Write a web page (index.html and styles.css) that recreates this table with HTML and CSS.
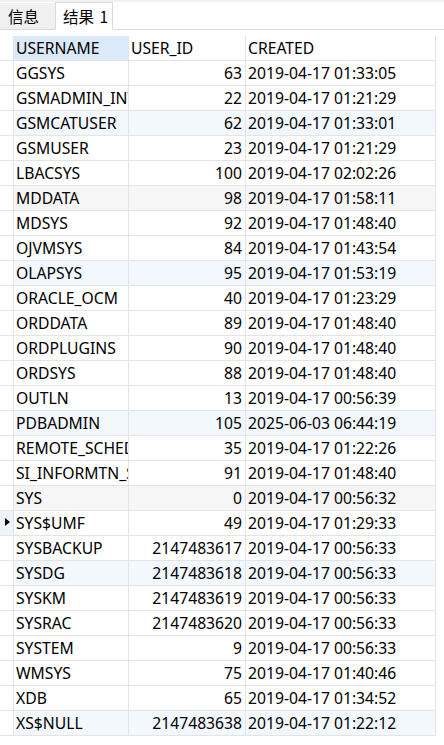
FILE: index.html
```html
<!DOCTYPE html>
<html>
<head>
<meta charset="utf-8">
<link rel="stylesheet" href="styles.css">
</head>
<body>
<div class="tabbar">
  <div class="tab">信息</div>
  <div class="tab active">结果 1</div>
</div>
<div class="grid">
  <div class="row head">
    <div class="c g"></div><div class="c u sel">USERNAME</div><div class="c i">USER_ID</div><div class="c d">CREATED</div>
  </div>
  <div class="row"><div class="c g"></div><div class="c u">GGSYS</div><div class="c i num">63</div><div class="c d">2019-04-17 01:33:05</div></div>
  <div class="row"><div class="c g"></div><div class="c u">GSMADMIN_INTERNAL</div><div class="c i num">22</div><div class="c d">2019-04-17 01:21:29</div></div>
  <div class="row blue"><div class="c g"></div><div class="c u">GSMCATUSER</div><div class="c i num">62</div><div class="c d">2019-04-17 01:33:01</div></div>
  <div class="row"><div class="c g"></div><div class="c u">GSMUSER</div><div class="c i num">23</div><div class="c d">2019-04-17 01:21:29</div></div>
  <div class="row"><div class="c g"></div><div class="c u">LBACSYS</div><div class="c i num">100</div><div class="c d">2019-04-17 02:02:26</div></div>
  <div class="row gray"><div class="c g"></div><div class="c u">MDDATA</div><div class="c i num">98</div><div class="c d">2019-04-17 01:58:11</div></div>
  <div class="row"><div class="c g"></div><div class="c u">MDSYS</div><div class="c i num">92</div><div class="c d">2019-04-17 01:48:40</div></div>
  <div class="row"><div class="c g"></div><div class="c u">OJVMSYS</div><div class="c i num">84</div><div class="c d">2019-04-17 01:43:54</div></div>
  <div class="row blue"><div class="c g"></div><div class="c u">OLAPSYS</div><div class="c i num">95</div><div class="c d">2019-04-17 01:53:19</div></div>
  <div class="row"><div class="c g"></div><div class="c u">ORACLE_OCM</div><div class="c i num">40</div><div class="c d">2019-04-17 01:23:29</div></div>
  <div class="row"><div class="c g"></div><div class="c u">ORDDATA</div><div class="c i num">89</div><div class="c d">2019-04-17 01:48:40</div></div>
  <div class="row"><div class="c g"></div><div class="c u">ORDPLUGINS</div><div class="c i num">90</div><div class="c d">2019-04-17 01:48:40</div></div>
  <div class="row"><div class="c g"></div><div class="c u">ORDSYS</div><div class="c i num">88</div><div class="c d">2019-04-17 01:48:40</div></div>
  <div class="row"><div class="c g"></div><div class="c u">OUTLN</div><div class="c i num">13</div><div class="c d">2019-04-17 00:56:39</div></div>
  <div class="row blue"><div class="c g"></div><div class="c u">PDBADMIN</div><div class="c i num">105</div><div class="c d">2025-06-03 06:44:19</div></div>
  <div class="row"><div class="c g"></div><div class="c u">REMOTE_SCHEDULER_AGENT</div><div class="c i num">35</div><div class="c d">2019-04-17 01:22:26</div></div>
  <div class="row"><div class="c g"></div><div class="c u">SI_INFORMTN_SCHEMA</div><div class="c i num">91</div><div class="c d">2019-04-17 01:48:40</div></div>
  <div class="row gray"><div class="c g"></div><div class="c u">SYS</div><div class="c i num">0</div><div class="c d">2019-04-17 00:56:32</div></div>
  <div class="row cur"><div class="c g"><span class="arrow"></span></div><div class="c u">SYS$UMF</div><div class="c i num">49</div><div class="c d">2019-04-17 01:29:33</div></div>
  <div class="row"><div class="c g"></div><div class="c u">SYSBACKUP</div><div class="c i num">2147483617</div><div class="c d">2019-04-17 00:56:33</div></div>
  <div class="row blue"><div class="c g"></div><div class="c u">SYSDG</div><div class="c i num">2147483618</div><div class="c d">2019-04-17 00:56:33</div></div>
  <div class="row"><div class="c g"></div><div class="c u">SYSKM</div><div class="c i num">2147483619</div><div class="c d">2019-04-17 00:56:33</div></div>
  <div class="row"><div class="c g"></div><div class="c u">SYSRAC</div><div class="c i num">2147483620</div><div class="c d">2019-04-17 00:56:33</div></div>
  <div class="row"><div class="c g"></div><div class="c u">SYSTEM</div><div class="c i num">9</div><div class="c d">2019-04-17 00:56:33</div></div>
  <div class="row"><div class="c g"></div><div class="c u">WMSYS</div><div class="c i num">75</div><div class="c d">2019-04-17 01:40:46</div></div>
  <div class="row"><div class="c g"></div><div class="c u">XDB</div><div class="c i num">65</div><div class="c d">2019-04-17 01:34:52</div></div>
  <div class="row blue"><div class="c g"></div><div class="c u">XS$NULL</div><div class="c i num">2147483638</div><div class="c d">2019-04-17 01:22:12</div></div>
</div>
</body>
</html>
```

FILE: styles.css
```css
* { box-sizing: border-box; }
html, body { margin: 0; padding: 0; background: #fff; }
body {
  font-family: "Noto Sans", "Noto Sans CJK SC", sans-serif;
  font-size: 15.7px;
  color: #000;
  width: 444px;
  height: 745px;
  overflow: hidden;
}
.tabbar {
  display: flex;
  align-items: flex-end;
  height: 30px;
  border-top: 2px solid #f0f0f0;
  border-bottom: 1px solid #dadada;
}
.tab {
  height: 27px;
  padding: 0 0 0 8px;
  display: flex;
  align-items: center;
  background: #f0f0f0;
  font-family: "Noto Sans CJK SC", sans-serif;
  font-size: 15.5px;
  margin-bottom: -1px;
  border-bottom: 1px solid #dadada;
  width: 55px;
  white-space: nowrap;
}
.tab.active {
  background: #fff;
  height: 28px;
  border-left: 1px solid #dadada;
  border-right: 1px solid #dadada;
  border-top: 1px solid #dadada;
  border-bottom: 1px solid #fff;
  width: 58px;
  padding-left: 7px;
  word-spacing: 2px;
}
.grid { margin-top: 6px; width: 436px; }
.row {
  display: grid;
  grid-template-columns: 14px 115px 117px 190px;
  height: 25px;
}
.c {
  border-right: 1px solid #e4e4e4;
  border-bottom: 1px solid #e4e4e4;
  padding: 0 3px 0 2px;
  line-height: 24px;
  white-space: nowrap;
  overflow: hidden;
}
.g { padding: 0; position: relative; }
.num { text-align: right; }
.head .c { background: #fff; }
.head .sel { background: #dbeaf8; }
.blue .u, .blue .i, .blue .d { background: #f2f8fe; }
.gray .u, .gray .i, .gray .d { background: #f6f6f6; }
.cur .g { background: #edf4fc; }
.arrow {
  position: absolute;
  left: 5px;
  top: 7px;
  width: 0;
  height: 0;
  border-top: 4.5px solid transparent;
  border-bottom: 4.5px solid transparent;
  border-left: 5px solid #000;
}
```
